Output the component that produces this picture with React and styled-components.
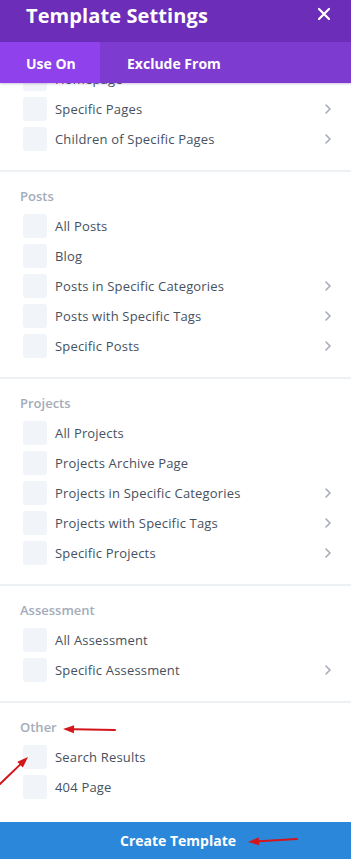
import styled, { createGlobalStyle } from "styled-components"

const GlobalStyle = createGlobalStyle`
  html, body { margin: 0; padding: 0; background: #fff; }
  body { font-family: "Open Sans", "Noto Sans", sans-serif; }
  * { box-sizing: border-box; }
`

const Modal = styled.div`
  position: relative;
  display: flex;
  flex-direction: column;
  width: 351px;
  height: 859px;
  background: #fff;
  overflow: hidden;
`

const Header = styled.div`
  display: flex;
  align-items: center;
  justify-content: space-between;
  height: 42px;
  padding: 0 20px 0 26px;
  background: #6c2eb9;
  color: #fff;
  flex-shrink: 0;
  h1 {
    margin: -12px 0 0;
    font-size: 20px;
    font-weight: 700;
    letter-spacing: 0.1px;
    white-space: nowrap;
  }
  button {
    display: flex;
    border: 0;
    padding: 0;
    background: none;
    color: #fff;
    margin-top: -14px;
  }
`

const Tabs = styled.div`
  position: relative;
  z-index: 2;
  display: flex;
  height: 41px;
  background: #7e3bd0;
  flex-shrink: 0;
  box-shadow: 0 1px 2px rgba(60, 20, 110, 0.25);
`

const Tab = styled.div`
  display: flex;
  align-items: center;
  width: ${p => (p.$active ? "100px" : "auto")};
  padding: 2px 0 0 ${p => (p.$active ? "26px" : "27px")};
  background: ${p => (p.$active ? "#8f42ec" : "transparent")};
  color: #fff;
  font-size: 14px;
  font-weight: 700;
  white-space: nowrap;
`

const Scroller = styled.div`
  flex: 1;
  overflow: hidden;
`

const List = styled.div`
  margin-top: -88px;
`

const Section = styled.div`
  padding: 14px 0 19px;
  border-bottom: 2px solid ${p => (p.$last ? "transparent" : "#eef1f4")};
`

const GroupLabel = styled.div`
  height: 20px;
  line-height: 20px;
  padding-left: 20px;
  margin-bottom: 8px;
  font-size: 13px;
  font-weight: 600;
  color: #a3acb8;
`

const Rows = styled.div`
  display: flex;
  flex-direction: column;
  gap: 6px;
`

const Row = styled.div`
  display: flex;
  align-items: center;
  height: 24px;
  padding: 0 19px 0 23px;
  font-size: 13px;
  font-weight: 500;
  letter-spacing: 0.18px;
  color: #465160;
`

const Check = styled.span`
  width: 24px;
  height: 24px;
  border-radius: 3px;
  background: #f1f4f8;
  margin-right: 8px;
  flex-shrink: 0;
`

const Name = styled.span`
  flex: 1;
  white-space: nowrap;
`

const Footer = styled.button`
  flex-shrink: 0;
  height: 37px;
  border: 0;
  background: #2b87da;
  color: #fff;
  font-family: "Open Sans", "Noto Sans", sans-serif;
  font-size: 14px;
  font-weight: 700;
  padding: 0 0 0 5px;
`

const Annotation = styled.svg`
  position: absolute;
  left: 0;
  top: 0;
  pointer-events: none;
`

const Chevron = () => (
  <svg width="8" height="12" viewBox="0 0 8 12">
    <path d="M2 2l4 4-4 4" fill="none" stroke="#a5acb5" strokeWidth="1.6" strokeLinecap="round" strokeLinejoin="round" />
  </svg>
)

const groups = [
  { label: "Pages", items: [["All Pages"], ["Homepage"], ["Specific Pages", 1], ["Children of Specific Pages", 1]] },
  { label: "Posts", items: [["All Posts"], ["Blog"], ["Posts in Specific Categories", 1], ["Posts with Specific Tags", 1], ["Specific Posts", 1]] },
  { label: "Projects", items: [["All Projects"], ["Projects Archive Page"], ["Projects in Specific Categories", 1], ["Projects with Specific Tags", 1], ["Specific Projects", 1]] },
  { label: "Assessment", items: [["All Assessment"], ["Specific Assessment", 1]] },
  { label: "Other", items: [["Search Results"], ["404 Page"]] },
]

const Arrow = ({ x1, y1, x2, y2 }) => {
  const a = Math.atan2(y2 - y1, x2 - x1)
  const len = 11, w = 4
  const bx = x2 - Math.cos(a) * len, by = y2 - Math.sin(a) * len
  const px = -Math.sin(a) * w, py = Math.cos(a) * w
  return (
    <g>
      <line x1={x1} y1={y1} x2={bx} y2={by} stroke="#d4151b" strokeWidth="2" strokeLinecap="round" />
      <polygon points={`${x2},${y2} ${bx + px},${by + py} ${bx - px},${by - py}`} fill="#d4151b" />
    </g>
  )
}

export default function App() {
  return (
    <Modal>
      <GlobalStyle />
      <Header>
        <h1>Template Settings</h1>
        <button aria-label="close">
          <svg width="14" height="14" viewBox="0 0 14 14">
            <path d="M2 2l10 10M12 2L2 12" stroke="#fff" strokeWidth="2.2" strokeLinecap="round" />
          </svg>
        </button>
      </Header>
      <Tabs>
        <Tab $active>Use On</Tab>
        <Tab>Exclude From</Tab>
      </Tabs>
      <Scroller>
        <List>
          {groups.map((g, i) => (
            <Section key={g.label} $last={i === groups.length - 1}>
              <GroupLabel>{g.label}</GroupLabel>
              <Rows>
                {g.items.map(([name, more]) => (
                  <Row key={name}>
                    <Check />
                    <Name>{name}</Name>
                    {more && <Chevron />}
                  </Row>
                ))}
              </Rows>
            </Section>
          ))}
        </List>
      </Scroller>
      <Footer>Create Template</Footer>
      <Annotation width="351" height="859">
        <Arrow x1={115} y1={730} x2={63} y2={729} />
        <Arrow x1={0} y1={784} x2={28} y2={757} />
        <Arrow x1={297} y1={839} x2={248} y2={842} />
      </Annotation>
    </Modal>
  )
}
